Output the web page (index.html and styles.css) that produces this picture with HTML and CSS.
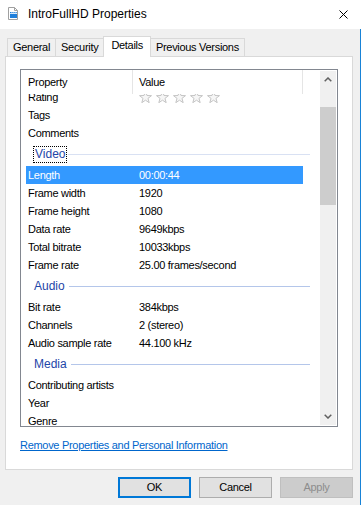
FILE: index.html
```html
<!DOCTYPE html>
<html lang="en">
<head>
    <meta charset="utf-8">
    <meta name="viewport" content="width=device-width, initial-scale=1.0">
    <title>IntroFullHD Properties</title>
    <link rel="stylesheet" href="styles.css">
</head>
<body>
    <div class="window">
        <div class="title-bar">
            <svg class="file-icon" viewBox="0 0 10 13" width="10" height="13">
                <path d="M0.5 0.5 H6.5 L9.5 3.5 V12.5 H0.5 Z" fill="#fff" stroke="#a0a0a0"/>
                <path d="M6.5 0.5 V3.5 H9.5" fill="none" stroke="#a0a0a0"/>
                <rect x="2" y="5" width="7" height="6" fill="#1f7fdb"/>
                <path d="M2 6.5 H9" stroke="#fff" stroke-width="0.8"/>
                <path d="M3.5 5 L4.5 6.5 M5.5 5 L6.5 6.5 M7.5 5 L8.5 6.5" stroke="#fff" stroke-width="0.7"/>
            </svg>
            <span class="title">IntroFullHD Properties</span>
            <svg class="close-btn" viewBox="0 0 9 9" width="9" height="9">
                <path d="M0.5 0.5 L8.5 8.5 M8.5 0.5 L0.5 8.5" stroke="#000" stroke-width="1"/>
            </svg>
        </div>

        <div class="dialog">
            <div class="tabs">
                <div class="tab">General</div>
                <div class="tab">Security</div>
                <div class="tab active">Details</div>
                <div class="tab">Previous Versions</div>
            </div>

            <div class="tab-panel">
                <div class="prop-list">
                    <div class="list-main">
                        <div class="list-header">
                            <div class="col-name">Property</div>
                            <div class="col-value">Value</div>
                        </div>
                        <div class="list-viewport">
                            <div class="list-rows">
                                <div class="row">
                                    <span class="name">Rating</span>
                                    <svg class="stars" viewBox="0 0 81 12" width="81" height="12">
                                        <defs>
                                            <polygon id="star" points="6.5,0.3 8.03,4.5 12.49,4.65 8.97,7.4 10.2,11.7 6.5,9.2 2.8,11.7 4.03,7.4 0.51,4.65 4.97,4.5" fill="#f6f6f6" stroke="#c4c4c4" stroke-width="1"/>
                                        </defs>
                                        <use href="#star" x="0"/>
                                        <use href="#star" x="17"/>
                                        <use href="#star" x="34"/>
                                        <use href="#star" x="51"/>
                                        <use href="#star" x="68"/>
                                    </svg>
                                </div>
                                <div class="row"><span class="name">Tags</span></div>
                                <div class="row"><span class="name">Comments</span></div>

                                <div class="group focused"><span class="label">Video</span></div>
                                <div class="row selected"><span class="name">Length</span><span>00:00:44</span></div>
                                <div class="row"><span class="name">Frame width</span><span>1920</span></div>
                                <div class="row"><span class="name">Frame height</span><span>1080</span></div>
                                <div class="row"><span class="name">Data rate</span><span>9649kbps</span></div>
                                <div class="row"><span class="name">Total bitrate</span><span>10033kbps</span></div>
                                <div class="row"><span class="name">Frame rate</span><span>25.00 frames/second</span></div>

                                <div class="group"><span class="label">Audio</span></div>
                                <div class="row"><span class="name">Bit rate</span><span>384kbps</span></div>
                                <div class="row"><span class="name">Channels</span><span>2 (stereo)</span></div>
                                <div class="row"><span class="name">Audio sample rate</span><span>44.100 kHz</span></div>

                                <div class="group"><span class="label">Media</span></div>
                                <div class="row"><span class="name">Contributing artists</span></div>
                                <div class="row"><span class="name">Year</span></div>
                                <div class="row"><span class="name">Genre</span></div>
                            </div>
                        </div>
                    </div>
                    <div class="scrollbar">
                        <div class="scroll-arrow">
                            <svg viewBox="0 0 8 5" width="8" height="5"><polyline points="0.7,4.3 4,1 7.3,4.3" fill="none" stroke="#606060" stroke-width="1.5"/></svg>
                        </div>
                        <div class="scroll-thumb"></div>
                        <div class="scroll-track"></div>
                        <div class="scroll-arrow">
                            <svg viewBox="0 0 8 5" width="8" height="5"><polyline points="0.7,0.7 4,4 7.3,0.7" fill="none" stroke="#606060" stroke-width="1.5"/></svg>
                        </div>
                    </div>
                </div>

                <a class="remove-link" href="#">Remove Properties and Personal Information</a>
            </div>

            <div class="buttons">
                <button class="btn default">OK</button>
                <button class="btn">Cancel</button>
                <button class="btn" disabled>Apply</button>
            </div>
        </div>
    </div>
</body>
</html>
```

FILE: styles.css
```css
* {
    box-sizing: border-box;
}

body {
    margin: 0;
    font-family: 'Liberation Sans', Arial, sans-serif;
    font-size: 11px;
    letter-spacing: -0.3px;
    line-height: 13px;
    color: #000;
    background-color: #f0f0f0;
}

.window {
    width: 361px;
    height: 505px;
    display: flex;
    flex-direction: column;
}

.title-bar {
    height: 29px;
    background-color: #ffffff;
    display: flex;
    align-items: center;
    padding: 0 13px 0 8px;
}

.file-icon {
    margin-right: 10px;
    margin-bottom: 3px;
}

.title {
    flex: 1;
    font-size: 12px;
    letter-spacing: 0;
}

.dialog {
    flex: 1;
    border-right: 1px solid #1883d7;
    padding: 7px 7px 0 5px;
}

.tabs {
    display: flex;
    align-items: flex-end;
    height: 20px;
    padding-left: 3px;
}

.tab {
    height: 18px;
    padding: 0 5px;
    margin-left: -1px;
    display: flex;
    align-items: center;
    background-color: #f0f0f0;
    border: 1px solid #d9d9d9;
    border-bottom: none;
}

.tab.active {
    position: relative;
    height: 21px;
    margin-bottom: -1px;
    padding: 0 7px 3px;
    background-color: #ffffff;
}

.tab-panel {
    height: 414px;
    background-color: #ffffff;
    border: 1px solid #d9d9d9;
    padding: 12px 14px 0;
}

.prop-list {
    width: 318px;
    height: 358px;
    border: 1px solid #828790;
    display: flex;
}

.list-main {
    flex: 1;
    display: flex;
    flex-direction: column;
    min-width: 0;
}

.list-header {
    height: 24px;
    flex-shrink: 0;
    display: flex;
}

.list-header div {
    display: flex;
    align-items: center;
    border-right: 1px solid #e5e5e5;
}

.col-name {
    width: 112px;
    padding-left: 7px;
}

.col-value {
    width: 170px;
    padding-left: 6px;
}

.list-viewport {
    flex: 1;
    overflow: hidden;
}

.list-rows {
    margin-top: -6px;
}

.row {
    height: 18px;
    margin: 0 17px 0 5px;
    display: flex;
    align-items: center;
    white-space: nowrap;
}

.row .name {
    width: 113px;
    flex-shrink: 0;
    padding-left: 2px;
}

.row.selected {
    background-color: #3399ff;
    color: #ffffff;
}

.stars {
    display: block;
}

.group {
    height: 24px;
    margin-right: 10px;
    padding-left: 13px;
    display: flex;
    align-items: center;
    font-size: 12px;
    letter-spacing: 0;
    color: #1e46a8;
}

.group::after {
    content: "";
    flex: 1;
    margin-left: 4px;
    border-top: 1px solid #b4c6ea;
}

.group.focused .label {
    padding: 1px;
    outline: 1px dotted #000;
}

.group.focused::after {
    margin-left: 2px;
    border-top-color: #d9e1f3;
}

.scrollbar {
    width: 16px;
    margin: 1px 1px 1px 0;
    background-color: #f0f0f0;
    display: flex;
    flex-direction: column;
}

.scroll-arrow {
    height: 17px;
    display: flex;
    align-items: center;
    justify-content: center;
}

.scroll-thumb {
    height: 98px;
    margin-top: 19px;
    background-color: #cdcdcd;
}

.scroll-track {
    flex: 1;
}

.remove-link {
    display: block;
    width: fit-content;
    margin-top: 12px;
    color: #0066cc;
}

.buttons {
    display: flex;
    justify-content: flex-end;
    gap: 8px;
    padding-top: 7px;
}

.btn {
    width: 73px;
    height: 21px;
    padding: 0;
    font: inherit;
    letter-spacing: inherit;
    color: #000;
    background-color: #e1e1e1;
    border: 1px solid #adadad;
}

.btn.default {
    border: 2px solid #0078d7;
}

.btn:disabled {
    color: #8c8c8c;
    background-color: #cccccc;
    border-color: #bfbfbf;
}
```
